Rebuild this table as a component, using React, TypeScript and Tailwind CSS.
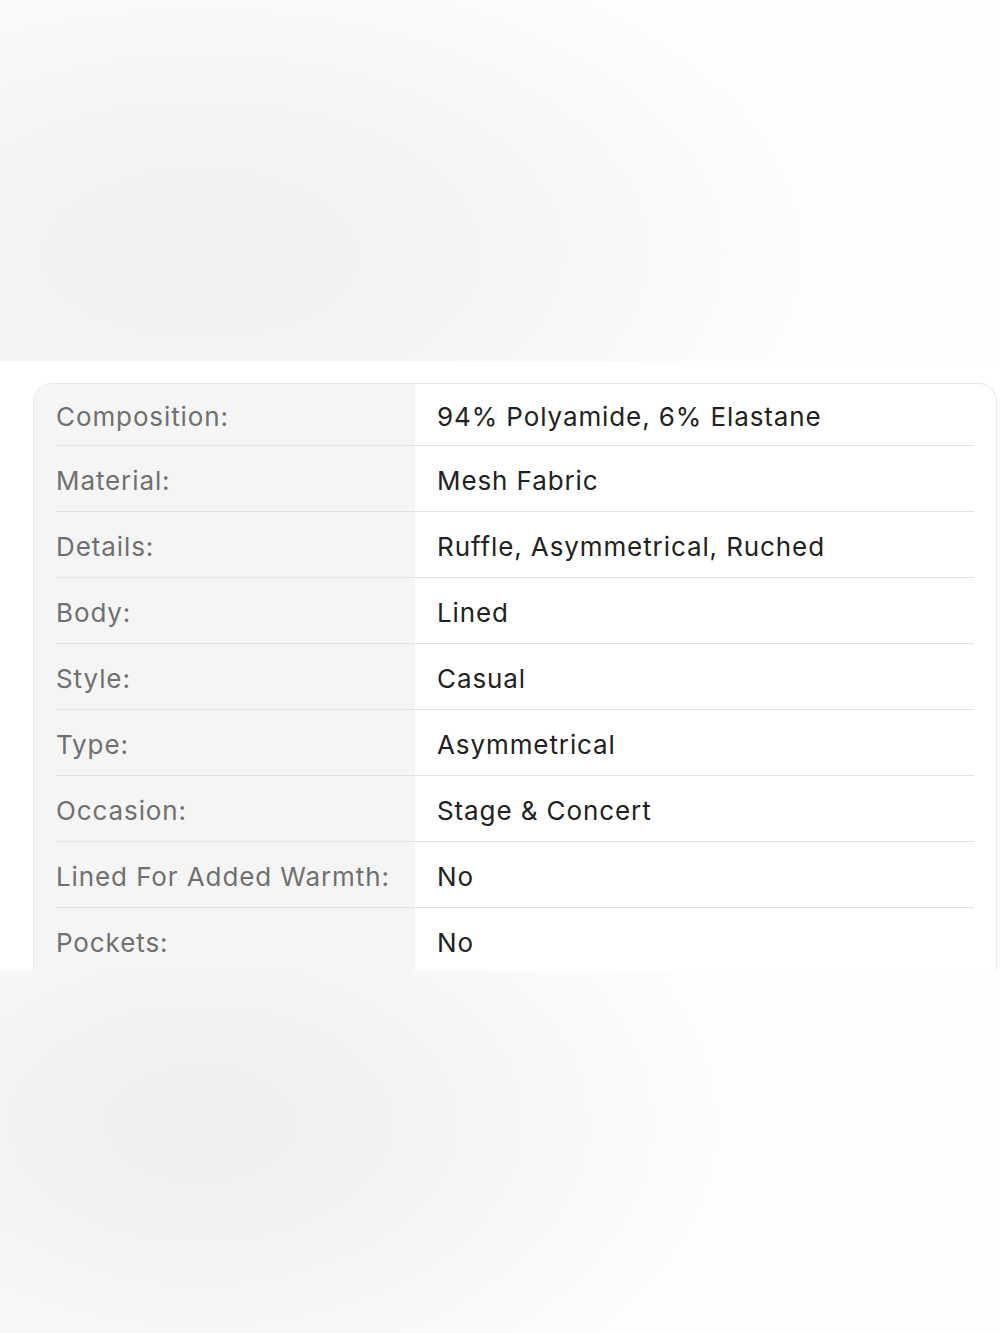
const specs: [string, string][] = [
  ["Composition:", "94% Polyamide, 6% Elastane"],
  ["Material:", "Mesh Fabric"],
  ["Details:", "Ruffle, Asymmetrical, Ruched"],
  ["Body:", "Lined"],
  ["Style:", "Casual"],
  ["Type:", "Asymmetrical"],
  ["Occasion:", "Stage & Concert"],
  ["Lined For Added Warmth:", "No"],
  ["Pockets:", "No"],
];

export default function App() {
  return (
    <div className="w-[1000px] h-[1333px] flex flex-col bg-white font-['Inter',sans-serif] overflow-hidden">
      <div className="h-[361px] shrink-0 bg-[radial-gradient(ellipse_60%_90%_at_20%_70%,#f1f1f1_0%,#f4f4f4_40%,#f9f9f9_75%,#fdfdfd_100%)]" />
      <div className="h-[610px] shrink-0 pt-[22px] pl-[33px] pr-[3px] overflow-hidden">
        <div className="rounded-t-[18px] border border-[#e9e9e9] bg-white overflow-hidden grid grid-cols-[381px_1fr]">
          {specs.map(([label, value], i) => (
            <div key={label} className="contents">
              <div className="bg-[#f5f5f5] pl-[22px]">
                <div
                  className={
                    i === 0
                      ? "h-[62px] pt-[3px] flex items-center border-b border-[#e3e3e3] text-[26px] tracking-[0.9px] text-[#707070]"
                      : "h-[66px] pt-[4px] flex items-center border-b border-[#e3e3e3] text-[26px] tracking-[0.9px] text-[#707070]"
                  }
                >
                  {label}
                </div>
              </div>
              <div className="pr-[22px]">
                <div
                  className={
                    i === 0
                      ? "h-[62px] pt-[3px] flex items-center border-b border-[#e3e3e3] pl-[22px] text-[26px] tracking-[0.9px] text-[#222222]"
                      : "h-[66px] pt-[4px] flex items-center border-b border-[#e3e3e3] pl-[22px] text-[26px] tracking-[0.9px] text-[#222222]"
                  }
                >
                  {value}
                </div>
              </div>
            </div>
          ))}
        </div>
      </div>
      <div className="flex-1 bg-[radial-gradient(ellipse_55%_95%_at_20%_42%,#efefef_0%,#f3f3f3_35%,#f8f8f8_65%,#fefefe_100%)]" />
    </div>
  );
}
